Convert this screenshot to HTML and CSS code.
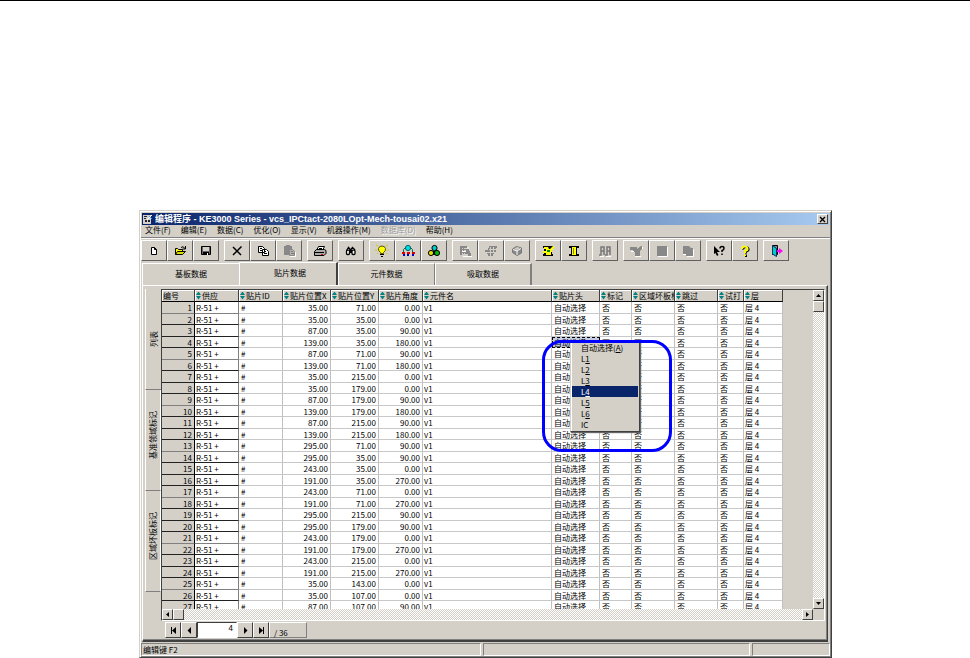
FILE: index.html
```html
<!DOCTYPE html>
<html lang="zh-CN">
<head>
<meta charset="utf-8">
<title>编辑程序 - KE3000 Series</title>
<link rel="stylesheet" href="styles.css">
</head>
<body>
<main class="window">
  <header class="titlebar">
    <svg class="app-icon" viewBox="0 0 10 10" aria-hidden="true"><path fill="#d4d0c8" d="M0 1h8v9H0z"/><path fill="#223" d="M1 2h3v1H1zM1 4h2v1H1zM2 6h2v2H2zM5 6h2v2H5z"/><path stroke="#fff" d="M4 6l5-5"/><path stroke="#39f" d="M6 2l3 3"/></svg>
    <h1>编辑程序 - KE3000 Series - vcs_IPCtact-2080LOpt-Mech-tousai02.x21</h1>
    <button class="close" aria-label="关闭"><svg viewBox="0 0 7 7"><path stroke="#000" stroke-width="1.4" d="M1 1l5 5M6 1L1 6"/></svg></button>
  </header>

  <nav class="menubar">
    <button>文件(F)</button><button>编辑(E)</button><button>数据(C)</button><button>优化(O)</button><button>显示(V)</button><button>机器操作(M)</button><button disabled>数据库(D)</button><button>帮助(H)</button>
  </nav>

  <div class="toolbar">
    <div class="group">
      <button aria-label="新建"><svg viewBox="0 0 16 14"><path fill="#fff" stroke="#000" d="M5.500 3.500h3l2 2v5h-5z"/><path fill="none" stroke="#000" d="M8.500 3.500v2h2"/></svg></button>
      <button aria-label="打开"><svg viewBox="0 0 16 14"><path fill="#ff0" stroke="#000" d="M3.500 10.500v-6h2l1 1h4v2"/><path fill="#dd0" stroke="#000" d="M3.500 10.500l2-3h8l-3 3z"/><path fill="none" stroke="#000" d="M9 3.500q2-2 4 1M13.500 2v3h-3"/></svg></button>
      <button aria-label="保存"><svg viewBox="0 0 16 14"><path fill="#666" stroke="#000" d="M3.500 2.500h9v8h-9z"/><path fill="#d4d0c8" d="M5 3h6v4H5z"/><path fill="#000" d="M5 8h6v3H5z"/><path fill="#fff" d="M9 9h1v2H9z"/></svg></button>
    </div>
    <div class="group">
      <button aria-label="删除"><svg viewBox="0 0 16 14"><path fill="none" stroke="#000" stroke-width="1.500" d="M4 3l8 8M12.500 2.500L4 11"/></svg></button>
      <button aria-label="复制"><svg viewBox="0 0 16 14"><path fill="#fff" stroke="#000" d="M3.500 2.500h4l2 2v4h-6zM7.500 5.500h4l2 2v4h-6z"/><path stroke="#000" d="M5 4.500h2M5 6.500h2M9 7.500h2M9 9.500h3"/></svg></button>
      <button aria-label="粘贴" disabled><svg viewBox="0 0 16 14"><path fill="#888" d="M3 2h2V1h4v1h2v9H3z"/><path fill="#b8b4ac" stroke="#888" d="M8.500 5.500h3l2 2v4h-5z"/><path stroke="#777" d="M10 7.500h2M10 9.500h3"/><path fill="none" stroke="#fff" d="M14.500 8v4.500H9"/></svg></button>
    </div>
    <div class="group">
      <button aria-label="打印"><svg viewBox="0 0 16 14"><path fill="#fff" stroke="#000" d="M6.500 2.500h6l-2 4h-6z"/><path fill="#aaa" stroke="#000" d="M2.500 7.500l2-2h8l1.500 1v3l-2 2H2.500z"/><path stroke="#000" d="M3 8.500h9M7 4.500h3"/><path stroke="#e00" d="M9 10.500h2"/></svg></button>
    </div>
    <div class="group">
      <button aria-label="查找"><svg viewBox="0 0 16 14"><g fill="#fff" stroke="#000" stroke-width="1.300"><rect x="3.500" y="6" width="3" height="4.500" rx="1"/><rect x="9" y="6" width="3" height="4.500" rx="1"/><path fill="#888" d="M4 6l1.500-2.500L7.500 6 9.500 3.500 12 6"/></g><path fill="#000" d="M7 6h2v3H7z"/></svg></button>
    </div>
    <div class="group">
      <button aria-label="提示"><svg viewBox="0 0 16 14"><path fill="#ff0" stroke="#550" d="M6.500 9.500v-1Q4 7 4.500 4.500 5 2 8 2t3.500 2.500Q12 7 9.500 8.500v1z"/><path stroke="#000" d="M6 10.500h4M7 12.500h2"/><path stroke="#cc0" d="M2 1l2 1M14 1l-2 1M1 6h2M13 6h2M3 10l1-1M13 10l-1-1"/></svg></button>
      <button aria-label="分配"><svg viewBox="0 0 16 14"><circle cx="8" cy="4" r="2.600" fill="#0dd" stroke="#066"/><path fill="none" stroke="#066" d="M3.500 9V5.500L6 3M12.500 9V5.500L10 3"/><path fill="#d00" d="M2 8h3v2H2zM7 8h3v2H7zM12 8h3v2h-3z"/><path fill="#00c" d="M3 10h2v2H3zM7 10h2v2H7zM12 10h2v2h-2z"/></svg></button>
      <button aria-label="优化"><svg viewBox="0 0 16 14"><circle cx="8.500" cy="4" r="2.600" fill="#0cc" stroke="#000"/><circle cx="5" cy="9" r="2.600" fill="#dd0" stroke="#000"/><circle cx="11" cy="9" r="2.600" fill="#0b0" stroke="#000"/><path fill="#000" d="M7 7h2v4H7z"/></svg></button>
    </div>
    <div class="group">
      <button aria-label="基板" disabled><svg viewBox="0 0 16 14"><path fill="#888" d="M3 2h7v2H5v1h5v1H5v2h5v1H5v2H3zM6 4h1v6H6zM9 5h3v2h1v2h1v3h-3v-2H8V8h1z"/><path stroke="#fff" d="M6 12.500h9M11 3v2M5 7.500h4"/></svg></button>
      <button aria-label="贴片" disabled><svg viewBox="0 0 16 14"><path fill="#888" d="M6 2h8v2h-1v4h-2v2h-1v2H8v-2H7v2H5v-2H4V8H2V6h3V4h1z"/><path stroke="#d4d0c8" d="M6 5.500h7M4 8.500h7M7.500 3v7M10.500 3v6"/></svg></button>
      <button aria-label="元件" disabled><svg viewBox="0 0 16 14"><path fill="#888" stroke="#777" d="M3.500 5l4-2.500 5 1.500v5L8 11.500 3.500 8.500z"/><path fill="#d4d0c8" d="M5 5l3-2 3 1-3 2z"/><path fill="none" stroke="#fff" d="M4 5.500L8 7l4-2.500M8 7v4"/></svg></button>
    </div>
    <div class="group">
      <button aria-label="传送"><svg viewBox="0 0 16 14"><path fill="#000" d="M3 2h10v2h-1v6h1v2H3v-2h1V4H3z"/><path fill="#ff0" d="M4 3h4l1 2h1l3-3 2 1-3 3v2h-1v3H6V9H3V7h3V5H4z"/><path fill="#080" d="M7 6h3v2H7z"/></svg></button>
      <button aria-label="夹紧"><svg viewBox="0 0 16 14"><path fill="#000" d="M3 2h10v2h-2v6h2v2H3v-2h2V4H3z"/><path fill="#ff0" d="M6 3h4v8H6z"/><path stroke="#880" d="M7.500 4v6"/></svg></button>
    </div>
    <div class="group">
      <button aria-label="吸嘴" disabled><svg viewBox="0 0 16 14"><path fill="none" stroke="#777" stroke-width="1.500" d="M4 3h3v4H4zM10 3h3v4h-3zM4 7v4H2M7 7v4M10 7v4H8M13 7v4"/><path stroke="#fff" d="M3 12.500h4M9 12.500h5"/></svg></button>
    </div>
    <div class="group">
      <button aria-label="开始" disabled><svg viewBox="0 0 16 14"><path fill="#888" d="M2 3h7v2l4-3h1v3l-2 2v5H7V8H5V6H2z"/><path stroke="#fff" d="M7 12.500h6M3 7.500h3M14.500 3v2"/></svg></button>
      <button aria-label="停止" disabled><svg viewBox="0 0 16 14"><path fill="#888" d="M3 2h10v10H3z"/><path fill="none" stroke="#fff" d="M4 12.500h9.500V3"/></svg></button>
      <button aria-label="单步" disabled><svg viewBox="0 0 16 14"><path fill="#888" d="M3 2h6l2 2h2v8H6v-2H3z"/><path fill="none" stroke="#fff" d="M7 12.500h6.500V5M3 10.500h3"/></svg></button>
    </div>
    <div class="group">
      <button aria-label="上下文帮助"><svg viewBox="0 0 16 14"><path fill="#000" d="M3 2l6 6H6l1.500 3-1.500 1L4.500 9 3 10z"/><path fill="none" stroke="#000" stroke-width="1.500" d="M9 4.500Q9 2.500 11 2.500t2 1.700-2 2.300v1.500M11 9.500V11"/></svg></button>
      <button aria-label="帮助"><svg viewBox="0 0 16 14"><g fill="none" stroke="#000" stroke-width="2"><path d="M6 5.500Q6 3 8.500 3t3 2-2.500 2.500v2M9 10.500v2.500"/></g><path fill="none" stroke="#ff0" stroke-width="2" d="M5 5Q5 2.500 7.500 2.500t3 2-2.500 2.500v2M8 10.500V12"/></svg></button>
    </div>
    <div class="group">
      <button aria-label="退出"><svg viewBox="0 0 16 14"><path fill="#888" stroke="#000" d="M4.500 1.500h5v9h-5z"/><path fill="#0cc" stroke="#036" d="M4.500 1.500l4 3v8l-4-2.500z"/><path fill="#f0f" d="M9 6h2V4l4 3-4 3V8H9z"/></svg></button>
    </div>
  </div>

  <div class="tabs" role="tablist">
    <button role="tab">基板数据</button><button role="tab" class="active" aria-selected="true">贴片数据</button><button role="tab">元件数据</button><button role="tab">吸取数据</button>
  </div>

  <section class="panel">
    <div class="side-tabs" role="tablist">
      <button role="tab" class="active" aria-selected="true"><span>列表</span></button>
      <button role="tab"><span>基准领域标记</span></button>
      <button role="tab"><span>区域坏板标记</span></button>
    </div>
    <div class="sheet">
      <div class="grid-box">
        <div class="viewport">
          <table>
            <colgroup><col class="c-no"><col class="c-id"><col class="c-id"><col class="c-pos"><col class="c-pos"><col class="c-id"><col><col class="c-head"><col class="c-mark"><col class="c-skip"><col class="c-skip"><col class="c-test"><col class="c-layer"></colgroup>
            <thead><tr><th class="plain">编号</th><th>供应</th><th>贴片ID</th><th>贴片位置X</th><th>贴片位置Y</th><th>贴片角度</th><th>元件名</th><th>贴片头</th><th>标记</th><th>区域坏板标记</th><th>跳过</th><th>试打</th><th>层</th></tr></thead>
            <tbody>
              <tr><th>1</th><td>R-51 +</td><td>#</td><td>35.00</td><td>71.00</td><td>0.00</td><td>v1</td><td>自动选择</td><td>否</td><td>否</td><td>否</td><td>否</td><td>层 4</td></tr>
              <tr><th>2</th><td>R-51 +</td><td>#</td><td>35.00</td><td>35.00</td><td>0.00</td><td>v1</td><td>自动选择</td><td>否</td><td>否</td><td>否</td><td>否</td><td>层 4</td></tr>
              <tr><th>3</th><td>R-51 +</td><td>#</td><td>87.00</td><td>35.00</td><td>90.00</td><td>v1</td><td>自动选择</td><td>否</td><td>否</td><td>否</td><td>否</td><td>层 4</td></tr>
              <tr><th>4</th><td>R-51 +</td><td>#</td><td>139.00</td><td>35.00</td><td>180.00</td><td>v1</td><td class="selected">自动选择
                <div class="popup" role="menu"><button role="menuitem">自动选择(<u>A</u>)</button><button role="menuitem">L<u>1</u></button><button role="menuitem">L<u>2</u></button><button role="menuitem">L<u>3</u></button><button role="menuitem" class="current">L<u>4</u></button><button role="menuitem">L<u>5</u></button><button role="menuitem">L<u>6</u></button><button role="menuitem">IC</button></div>
                <div class="callout"></div></td><td>否</td><td>否</td><td>否</td><td>否</td><td>层 4</td></tr>
              <tr><th>5</th><td>R-51 +</td><td>#</td><td>87.00</td><td>71.00</td><td>90.00</td><td>v1</td><td>自动选择</td><td>否</td><td>否</td><td>否</td><td>否</td><td>层 4</td></tr>
              <tr><th>6</th><td>R-51 +</td><td>#</td><td>139.00</td><td>71.00</td><td>180.00</td><td>v1</td><td>自动选择</td><td>否</td><td>否</td><td>否</td><td>否</td><td>层 4</td></tr>
              <tr><th>7</th><td>R-51 +</td><td>#</td><td>35.00</td><td>215.00</td><td>0.00</td><td>v1</td><td>自动选择</td><td>否</td><td>否</td><td>否</td><td>否</td><td>层 4</td></tr>
              <tr><th>8</th><td>R-51 +</td><td>#</td><td>35.00</td><td>179.00</td><td>0.00</td><td>v1</td><td>自动选择</td><td>否</td><td>否</td><td>否</td><td>否</td><td>层 4</td></tr>
              <tr><th>9</th><td>R-51 +</td><td>#</td><td>87.00</td><td>179.00</td><td>90.00</td><td>v1</td><td>自动选择</td><td>否</td><td>否</td><td>否</td><td>否</td><td>层 4</td></tr>
              <tr><th>10</th><td>R-51 +</td><td>#</td><td>139.00</td><td>179.00</td><td>180.00</td><td>v1</td><td>自动选择</td><td>否</td><td>否</td><td>否</td><td>否</td><td>层 4</td></tr>
              <tr><th>11</th><td>R-51 +</td><td>#</td><td>87.00</td><td>215.00</td><td>90.00</td><td>v1</td><td>自动选择</td><td>否</td><td>否</td><td>否</td><td>否</td><td>层 4</td></tr>
              <tr><th>12</th><td>R-51 +</td><td>#</td><td>139.00</td><td>215.00</td><td>180.00</td><td>v1</td><td>自动选择</td><td>否</td><td>否</td><td>否</td><td>否</td><td>层 4</td></tr>
              <tr><th>13</th><td>R-51 +</td><td>#</td><td>295.00</td><td>71.00</td><td>90.00</td><td>v1</td><td>自动选择</td><td>否</td><td>否</td><td>否</td><td>否</td><td>层 4</td></tr>
              <tr><th>14</th><td>R-51 +</td><td>#</td><td>295.00</td><td>35.00</td><td>90.00</td><td>v1</td><td>自动选择</td><td>否</td><td>否</td><td>否</td><td>否</td><td>层 4</td></tr>
              <tr><th>15</th><td>R-51 +</td><td>#</td><td>243.00</td><td>35.00</td><td>0.00</td><td>v1</td><td>自动选择</td><td>否</td><td>否</td><td>否</td><td>否</td><td>层 4</td></tr>
              <tr><th>16</th><td>R-51 +</td><td>#</td><td>191.00</td><td>35.00</td><td>270.00</td><td>v1</td><td>自动选择</td><td>否</td><td>否</td><td>否</td><td>否</td><td>层 4</td></tr>
              <tr><th>17</th><td>R-51 +</td><td>#</td><td>243.00</td><td>71.00</td><td>0.00</td><td>v1</td><td>自动选择</td><td>否</td><td>否</td><td>否</td><td>否</td><td>层 4</td></tr>
              <tr><th>18</th><td>R-51 +</td><td>#</td><td>191.00</td><td>71.00</td><td>270.00</td><td>v1</td><td>自动选择</td><td>否</td><td>否</td><td>否</td><td>否</td><td>层 4</td></tr>
              <tr><th>19</th><td>R-51 +</td><td>#</td><td>295.00</td><td>215.00</td><td>90.00</td><td>v1</td><td>自动选择</td><td>否</td><td>否</td><td>否</td><td>否</td><td>层 4</td></tr>
              <tr><th>20</th><td>R-51 +</td><td>#</td><td>295.00</td><td>179.00</td><td>90.00</td><td>v1</td><td>自动选择</td><td>否</td><td>否</td><td>否</td><td>否</td><td>层 4</td></tr>
              <tr><th>21</th><td>R-51 +</td><td>#</td><td>243.00</td><td>179.00</td><td>0.00</td><td>v1</td><td>自动选择</td><td>否</td><td>否</td><td>否</td><td>否</td><td>层 4</td></tr>
              <tr><th>22</th><td>R-51 +</td><td>#</td><td>191.00</td><td>179.00</td><td>270.00</td><td>v1</td><td>自动选择</td><td>否</td><td>否</td><td>否</td><td>否</td><td>层 4</td></tr>
              <tr><th>23</th><td>R-51 +</td><td>#</td><td>243.00</td><td>215.00</td><td>0.00</td><td>v1</td><td>自动选择</td><td>否</td><td>否</td><td>否</td><td>否</td><td>层 4</td></tr>
              <tr><th>24</th><td>R-51 +</td><td>#</td><td>191.00</td><td>215.00</td><td>270.00</td><td>v1</td><td>自动选择</td><td>否</td><td>否</td><td>否</td><td>否</td><td>层 4</td></tr>
              <tr><th>25</th><td>R-51 +</td><td>#</td><td>35.00</td><td>143.00</td><td>0.00</td><td>v1</td><td>自动选择</td><td>否</td><td>否</td><td>否</td><td>否</td><td>层 4</td></tr>
              <tr><th>26</th><td>R-51 +</td><td>#</td><td>35.00</td><td>107.00</td><td>0.00</td><td>v1</td><td>自动选择</td><td>否</td><td>否</td><td>否</td><td>否</td><td>层 4</td></tr>
              <tr><th>27</th><td>R-51 +</td><td>#</td><td>87.00</td><td>107.00</td><td>90.00</td><td>v1</td><td>自动选择</td><td>否</td><td>否</td><td>否</td><td>否</td><td>层 4</td></tr>
            </tbody>
          </table>
        </div>
        <div class="scroll vertical">
          <button aria-label="向上"><svg viewBox="0 0 7 7"><path d="M1 5h5L3.500 2z"/></svg></button>
          <div class="thumb"></div>
          <button class="end" aria-label="向下"><svg viewBox="0 0 7 7"><path d="M1 2h5L3.500 5z"/></svg></button>
        </div>
        <div class="scroll horizontal">
          <button aria-label="向左"><svg viewBox="0 0 7 7"><path d="M5 1v5L2 3.500z"/></svg></button>
          <div class="thumb"></div>
          <button class="end" aria-label="向右"><svg viewBox="0 0 7 7"><path d="M2 1v5l3-2.500z"/></svg></button>
        </div>
      </div>
      <div class="record-nav">
        <button aria-label="第一条"><svg viewBox="0 0 7 7"><path d="M1 0h1v7H1zM6 0v7L2 3.500z"/></svg></button>
        <button aria-label="上一条"><svg viewBox="0 0 7 7"><path d="M5 0v7L1.500 3.500z"/></svg></button>
        <input type="text" value="4" aria-label="当前记录">
        <button aria-label="下一条"><svg viewBox="0 0 7 7"><path d="M2 0v7l3.500-3.500z"/></svg></button>
        <button aria-label="最后一条"><svg viewBox="0 0 7 7"><path d="M5 0h1v7H5zM1 0v7l4-3.500z"/></svg></button>
        <span class="total">/ 36</span>
      </div>
    </div>
  </section>

  <footer class="statusbar"><span class="hint">编辑键 F2</span><span class="middle"></span><span class="last"></span></footer>
</main>
</body>
</html>
```
FILE: styles.css
```css
:root {
  --face: #d4d0c8;
  --shade: #808080;
  --dark: #404040;
}

* { box-sizing: border-box; }

body {
  margin: 0;
  height: 100vh;
  border-top: 1px solid #000;
  background: #fff;
  color: #000;
  font: 8px/10px "Noto Sans CJK SC", sans-serif;
  display: flex;
  flex-direction: column;
}

button {
  font: inherit;
  color: inherit;
  margin: 0;
  padding: 0;
  border: 0;
  background: none;
  white-space: nowrap;
}

svg { display: block; flex: none; }

.window {
  flex: 1;
  min-height: 0;
  margin: 209px 138px 0 139px;
  padding: 1px;
  background: var(--face);
  border: 1px solid;
  border-color: var(--face) var(--dark) var(--dark) var(--face);
  box-shadow: inset 1px 1px #fff, inset -1px -1px var(--shade);
  display: flex;
  flex-direction: column;
}

/* Title and menus */
.titlebar {
  display: flex;
  align-items: center;
  gap: 2px;
  height: 12px;
  margin: 1px 1px 0;
  padding: 0 1px;
  background: linear-gradient(to right, #0a246a, #a6caf0);
  color: #fff;
}
.titlebar h1 {
  flex: 1;
  margin: 0;
  font: 700 9px/12px "Liberation Sans", "Noto Sans CJK SC", sans-serif;
  white-space: nowrap;
}
.app-icon { width: 10px; height: 10px; }
.close {
  width: 11px;
  height: 10px;
  display: grid;
  place-items: center;
  background: var(--face);
  border: 1px solid;
  border-color: #fff var(--dark) var(--dark) #fff;
}
.close svg { width: 7px; height: 7px; }

.menubar {
  display: flex;
  align-items: center;
  gap: 10px;
  height: 13px;
  padding: 0 4px 2px;
  border-bottom: 1px solid var(--shade);
}
.menubar button:disabled { color: #999; text-shadow: 1px 1px #fff; }

/* Toolbar */
.toolbar {
  display: flex;
  gap: 5px;
  height: 23px;
  padding: 1px 0 0;
  border-top: 1px solid #fff;
}
.group { display: flex; }
.group button {
  width: 26px;
  height: 21px;
  display: grid;
  place-items: center;
  border: 1px solid;
  border-color: #fff #606060 #606060 #fff;
}
.group svg { width: 16px; height: 14px; }

/* Tabs */
.tabs {
  display: flex;
  align-items: flex-end;
  height: 24px;
  padding: 0 1px;
}
.tabs button {
  width: 97px;
  height: 22px;
  padding-bottom: 1px;
  border-top: 1px solid #fff;
  border-left: 1px solid #fff;
  border-right: 1px solid var(--shade);
}
.tabs button:first-child { border-right: 0; }
.tabs .active {
  width: 99px;
  height: 23px;
  padding: 0 0 2px 4px;
  border-right: 2px solid var(--dark);
}
.tabs button:last-child { border-right: 2px solid var(--shade); }

/* Main panel */
.panel {
  flex: 1;
  min-height: 0;
  display: flex;
  margin: 0 2px 0 1px;
  padding: 3px 2px 0 2px;
  border: 1px solid;
  border-color: #fff var(--dark) var(--dark) #fff;
  border-bottom-width: 2px;
  box-shadow: inset -1px -1px var(--shade);
}

.side-tabs {
  width: 16px;
  display: flex;
  flex-direction: column;
}
.side-tabs button {
  height: 101px;
  padding-bottom: 10px;
  border-left: 1px solid #fff;
  border-bottom: 1px solid var(--shade);
  border-right: 1px solid #fff;
  display: grid;
  place-items: center;
}
.side-tabs .active { padding-bottom: 0; border-right: 0; }
.side-tabs span {
  writing-mode: vertical-rl;
  text-orientation: sideways;
  transform: rotate(180deg);
}

.sheet {
  flex: 1;
  min-width: 0;
  display: flex;
  flex-direction: column;
}
.grid-box {
  flex: 1;
  min-height: 0;
  display: grid;
  grid-template: minmax(0, 1fr) 11px / minmax(0, 1fr) 11px;
  border: 1px solid;
  border-color: var(--dark) #fff #fff var(--dark);
}
.viewport { overflow: hidden; padding-right: 30px; }

table {
  width: 100%;
  table-layout: fixed;
  border-collapse: separate;
  border-spacing: 0;
  background: #fff;
}
.c-no { width: 33px; }
.c-id { width: 44px; }
.c-pos { width: 48px; }
.c-head { width: 48px; }
.c-mark { width: 32px; }
.c-skip { width: 43px; }
.c-test { width: 26px; }
.c-layer { width: 39px; }

th, td {
  height: 12px;
  padding: 0 2px;
  line-height: 10px;
  font-weight: 400;
  text-align: left;
  white-space: nowrap;
}
thead th {
  overflow: hidden;
  padding: 0 1px;
  background: var(--face);
  border-right: 1px solid var(--dark);
  border-bottom: 1px solid #000;
  box-shadow: inset 1px 1px #fff;
}
thead th::before {
  content: "";
  display: inline-block;
  width: 5px;
  height: 8px;
  margin-right: 1px;
  vertical-align: -1px;
  background: #008080;
  clip-path: polygon(50% 0, 100% 45%, 0 45%, 0 55%, 100% 55%, 50% 100%, 0 55%, 0 45%);
}
thead .plain::before { display: none; }

tbody tr:nth-child(even) > * { height: 11px; line-height: 9px; }
tbody td {
  border-right: 1px solid #c0c0c0;
  border-bottom: 1px solid #c8c8c8;
}
tbody th {
  background: var(--face);
  text-align: right;
  border-right: 1px solid #000;
  border-bottom: 1px solid #222;
}
tbody td:nth-child(2) {
  padding-left: 1px;
  border-right-color: var(--shade);
  border-bottom-color: #222;
}
tbody td:nth-child(7), tbody td:nth-child(13) { padding-left: 1px; }
tbody tr:nth-child(4n + 1) > :nth-child(-n + 2) { border-bottom-color: var(--shade); }
tbody td:nth-child(n + 4):nth-child(-n + 6) { text-align: right; }

tbody .selected {
  position: relative;
  background: #c4cbe4;
  outline: 1px dashed #000;
  outline-offset: -1px;
}

/* Head selection menu */
.popup {
  position: absolute;
  z-index: 2;
  left: 18px;
  top: 4px;
  width: 70px;
  padding: 0 1px 1px;
  background: var(--face);
  border: 1px solid;
  border-color: var(--face) var(--dark) var(--dark) var(--face);
  box-shadow: inset 1px 1px #fff, 1px 1px 1px #666;
}
.popup button {
  display: block;
  width: 100%;
  height: 11px;
  padding-left: 9px;
  line-height: 10px;
  text-align: left;
}
.popup .current { background: #0a246a; color: #fff; }
.callout {
  position: absolute;
  z-index: 3;
  left: -10px;
  top: 3px;
  width: 130px;
  height: 112px;
  border: 3px solid #00f;
  border-radius: 20px;
  pointer-events: none;
}

/* Scroll bars */
.scroll {
  display: flex;
  background: repeating-conic-gradient(#fff 0 25%, #d4d0c8 0 50%) 0 0 / 2px 2px;
}
.vertical { flex-direction: column; }
.scroll button, .thumb {
  width: 11px;
  height: 11px;
  display: grid;
  place-items: center;
  background: var(--face);
  border: 1px solid;
  border-color: #fff var(--dark) var(--dark) #fff;
}
.scroll svg, .record-nav svg { width: 7px; height: 7px; }
.vertical .end { margin-top: auto; }
.horizontal .end { margin-left: auto; }

/* Record navigation */
.record-nav {
  display: flex;
  height: 19px;
  padding: 1px 0 2px 4px;
}
.record-nav button {
  width: 16px;
  display: grid;
  place-items: center;
  border: 1px solid;
  border-color: #fff var(--dark) var(--dark) #fff;
}
.record-nav input {
  width: 40px;
  margin: 0;
  padding: 0 3px 4px;
  font: inherit;
  text-align: right;
  background: #fff;
  border: 1px solid;
  border-color: var(--dark) #fff #fff var(--dark);
}
.total {
  width: 38px;
  padding: 5px 4px 0;
  border: 1px solid;
  border-color: #fff var(--shade) var(--shade) #fff;
}

/* Status bar */
.statusbar {
  display: flex;
  gap: 2px;
  height: 13px;
  margin-top: 1px;
}
.statusbar span {
  border: 1px solid;
  border-color: var(--shade) #fff #fff var(--shade);
  line-height: 11px;
}
.hint { flex: 341; padding-left: 1px; }
.middle { flex: 269; }
.last { flex: 77; }
```
